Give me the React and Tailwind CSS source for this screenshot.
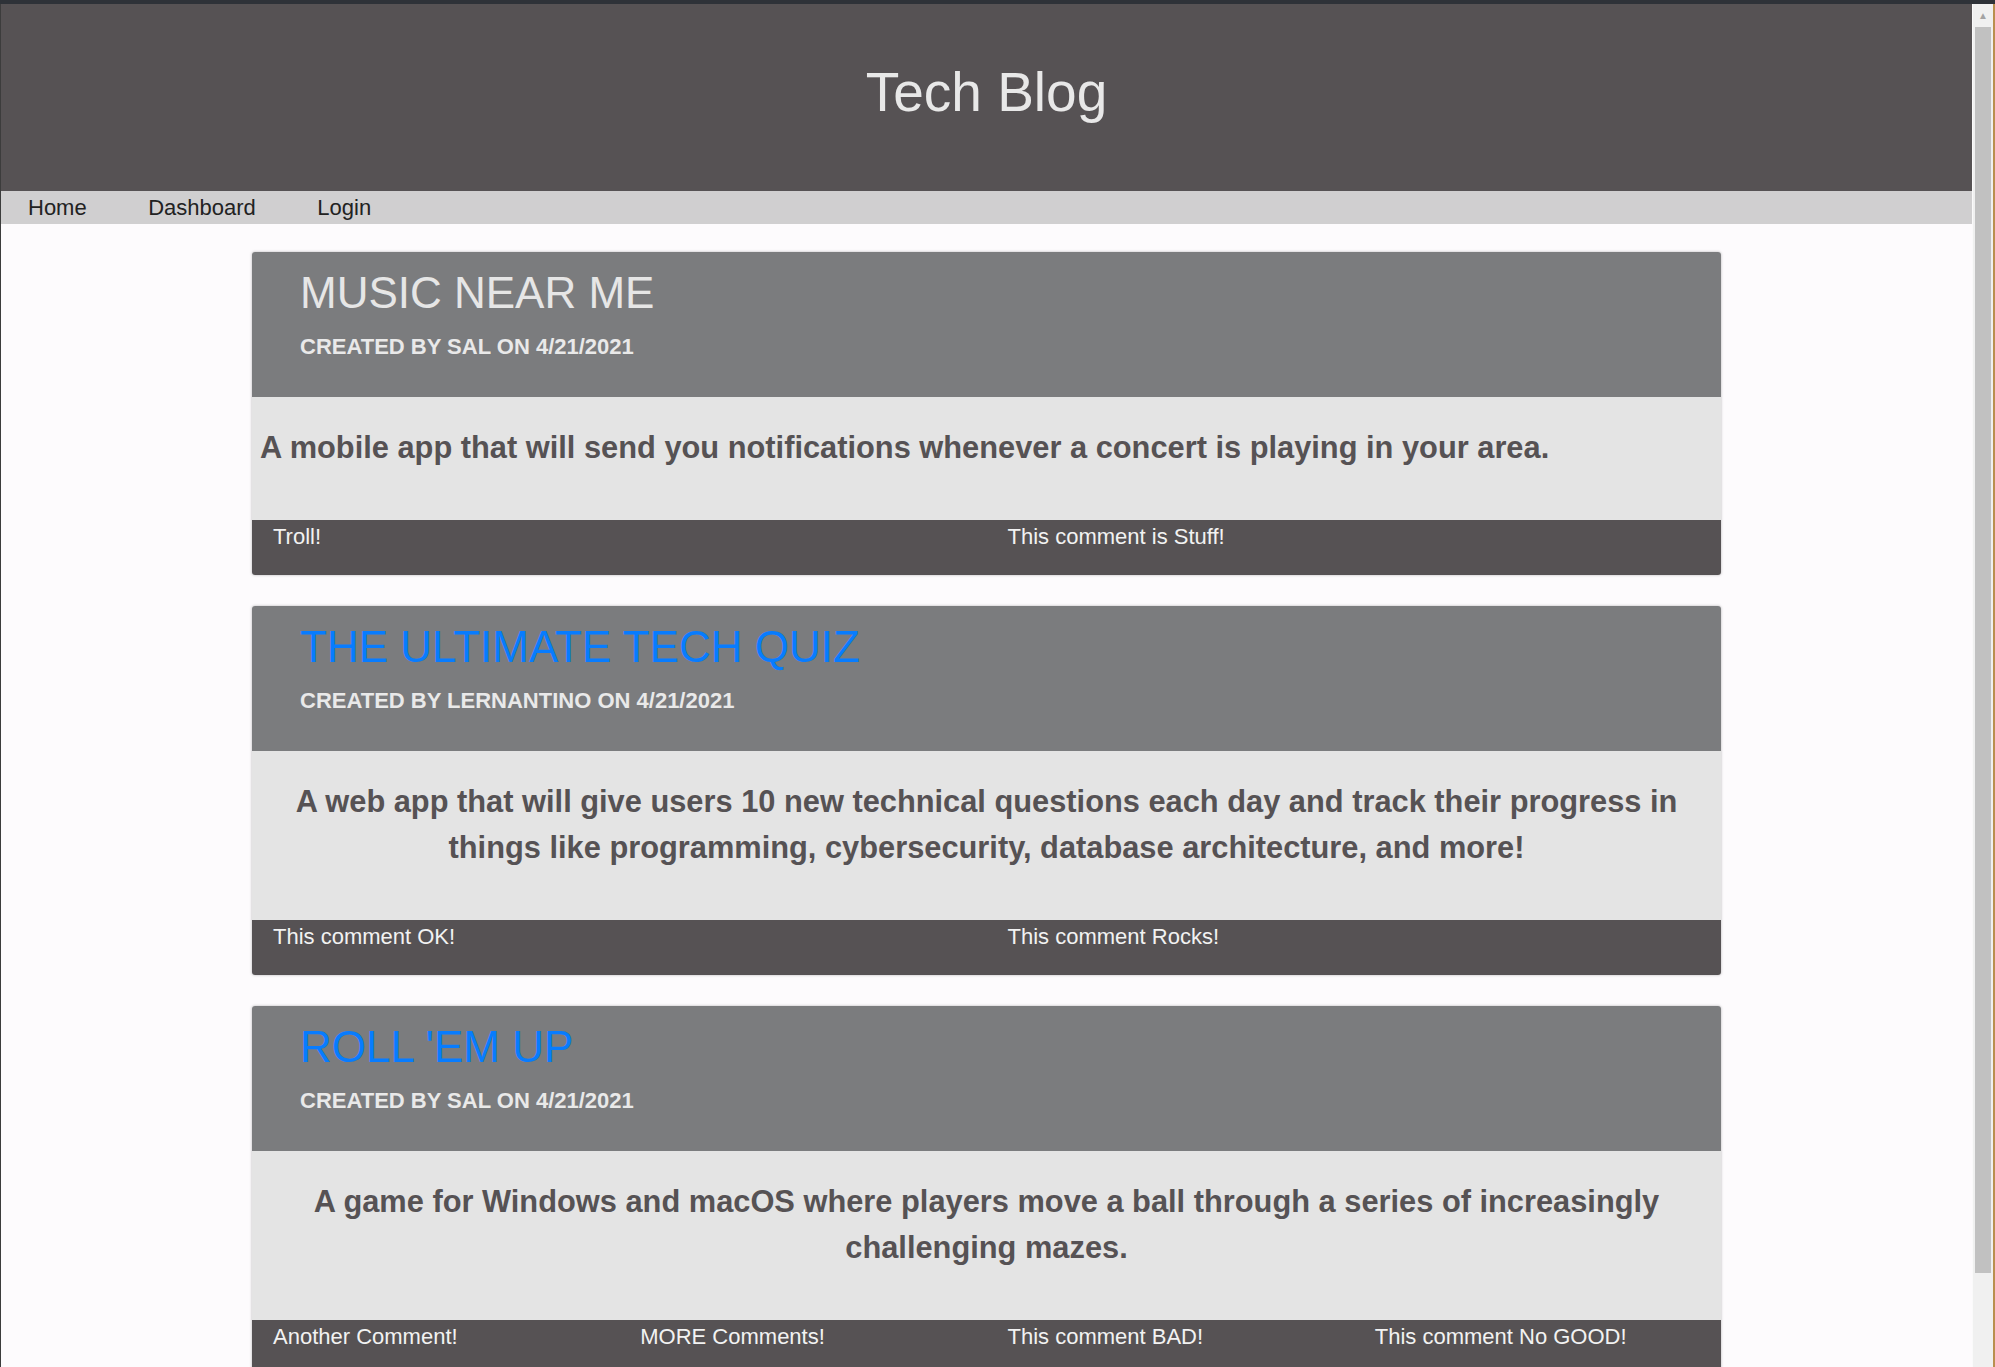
const POSTS = [
  {
    title: 'MUSIC NEAR ME',
    link: false,
    author: 'SAL',
    date: '4/21/2021',
    body: 'A mobile app that will send you notifications whenever a concert is playing in your area.',
    center: false,
    comments: ['Troll!', 'This comment is Stuff!'],
  },
  {
    title: 'THE ULTIMATE TECH QUIZ',
    link: true,
    author: 'LERNANTINO',
    date: '4/21/2021',
    body: 'A web app that will give users 10 new technical questions each day and track their progress in things like programming, cybersecurity, database architecture, and more!',
    center: true,
    comments: ['This comment OK!', 'This comment Rocks!'],
  },
  {
    title: "ROLL 'EM UP",
    link: true,
    author: 'SAL',
    date: '4/21/2021',
    body: 'A game for Windows and macOS where players move a ball through a series of increasingly challenging mazes.',
    center: true,
    comments: ['Another Comment!', 'MORE Comments!', 'This comment BAD!', 'This comment No GOOD!'],
  },
];

function PostCard({ post }) {
  return (
    <article className="w-[1469px] mx-auto shrink-0 rounded-[3px] overflow-hidden shadow-[0_0_3px_rgba(0,0,0,0.28)]">
      <div className="bg-[#7b7c7e] px-[48px] pt-[16px] pb-[38px]">
        <h2 className={`text-[44px] leading-[49px] font-normal ${post.link ? 'text-[#077cff]' : 'text-[#e6e6e6]'}`}>
          {post.title}
        </h2>
        <p className="mt-[17px] text-[22px] leading-[25px] font-bold text-[#e9e9e9]">
          CREATED BY {post.author} ON {post.date}
        </p>
      </div>
      <div className="bg-[#e4e4e4] px-[8px] pt-[28px] pb-[49px]">
        <p className={`text-[30.8px] leading-[46px] font-bold text-[#565254] ${post.center ? 'text-center' : 'text-left'}`}>
          {post.body}
        </p>
      </div>
      <div className="bg-[#565254] flex pt-[4px] pb-[26px]">
        {post.comments.map(c => (
          <div key={c} className="flex-1 pl-[21px] text-[22px] leading-[25px] text-[#f2f2f2]">{c}</div>
        ))}
      </div>
    </article>
  );
}

export default function App() {
  return (
    <div className="h-[1367px] overflow-hidden flex flex-col bg-[#2e3238] font-['Liberation_Sans',Arial,sans-serif]">
      <div className="h-[4px] shrink-0" />
      <div className="flex flex-1 min-h-0">
        <div className="flex-1 flex flex-col border-l border-[#3c3c3c] bg-[#fdfbfd] overflow-hidden">
          <header className="h-[187px] shrink-0 bg-[#565254] pt-[57px] text-center">
            <h1 className="text-[55px] leading-[62px] text-[#e8e8e8]">Tech Blog</h1>
          </header>
          <nav className="h-[33px] shrink-0 bg-[#d0cfd0] flex items-center pl-[27px] gap-[61.5px] text-[22px] text-[#222]">
            <a>Home</a>
            <a>Dashboard</a>
            <a>Login</a>
          </nav>
          <main className="flex flex-col gap-[31px] pt-[28px]">
            {POSTS.map(p => <PostCard key={p.title} post={p} />)}
          </main>
        </div>
        <div className="w-[21px] shrink-0 bg-[#f0f0f0] border-l border-[#fafafa] flex flex-col">
          <div className="h-[23px] flex items-center justify-center text-[10px] text-[#a3a3a3]">▲</div>
          <div className="mx-[2px] h-[1246px] bg-[#c1c1c1]" />
        </div>
        <div className="w-[2px] shrink-0 bg-[#b98f4f]" />
      </div>
    </div>
  );
}
